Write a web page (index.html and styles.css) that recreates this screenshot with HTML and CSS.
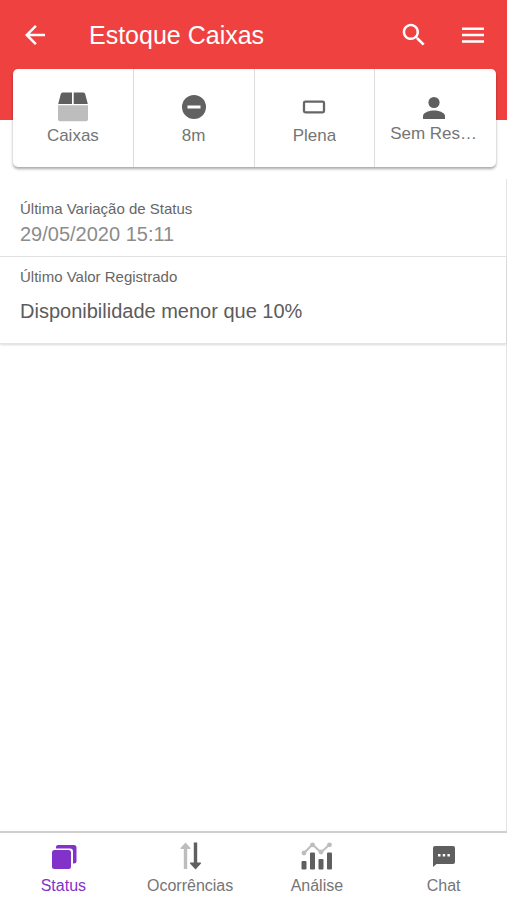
FILE: index.html
```html
<!DOCTYPE html>
<html lang="pt-BR">
<head>
  <meta charset="UTF-8" />
  <meta name="viewport" content="width=device-width, initial-scale=1" />
  <title>Estoque Caixas</title>
  <link rel="stylesheet" href="styles.css">
</head>
<body>

  <header class="header">
    <div class="toolbar">
      <button class="icon-btn" type="button" aria-label="Voltar">
        <svg width="30" height="30" viewBox="0 0 24 24" fill="#fff"><path d="M20 11H7.83l5.59-5.59L12 4l-8 8 8 8 1.41-1.41L7.83 13H20v-2z"/></svg>
      </button>
      <h1>Estoque Caixas</h1>
      <button class="icon-btn" type="button" aria-label="Buscar">
        <svg width="30" height="30" viewBox="0 0 24 24" fill="#fff"><path d="M15.5 14h-.79l-.28-.27C15.41 12.59 16 11.11 16 9.5 16 5.91 13.09 3 9.5 3S3 5.91 3 9.5 5.91 16 9.5 16c1.61 0 3.09-.59 4.23-1.57l.27.28v.79l5 4.99L20.49 19l-4.99-5zm-6 0C7.01 14 5 11.99 5 9.5S7.01 5 9.5 5 14 7.01 14 9.5 11.99 14 9.5 14z"/></svg>
      </button>
      <button class="icon-btn" type="button" aria-label="Menu">
        <svg width="30" height="30" viewBox="0 0 30 30" fill="#fff"><path d="M4 7.500h22V10H4zM4 13.800h22v2.500H4zM4 20.200h22v2.500H4z"/></svg>
      </button>
    </div>
  </header>

  <section class="card">
    <div class="card-item">
      <svg width="30" height="30" viewBox="0 0 30 30">
        <path fill="#5f5f5f" d="M4.600 0.500H14v11.500H0.200L2.800 2Q3.200 0.500 4.600 0.500zM15.700 0.500h9.700q1.400 0 1.800 1.500l2.600 10H15.700z"/>
        <path fill="#bdbdbd" d="M0 13.300h30v14q0 2-2 2H2q-2 0-2-2z"/>
      </svg>
      <span>Caixas</span>
    </div>
    <div class="card-item">
      <svg width="30" height="30" viewBox="0 0 30 30">
        <circle cx="15" cy="15" r="12" fill="#616161"/>
        <rect x="8.500" y="13.500" width="13" height="3" fill="#fff"/>
      </svg>
      <span>8m</span>
    </div>
    <div class="card-item">
      <svg width="30" height="30" viewBox="0 0 30 30">
        <rect x="5" y="9.700" width="20" height="10.600" rx="1.300" fill="none" stroke="#666" stroke-width="2.300"/>
      </svg>
      <span>Plena</span>
    </div>
    <div class="card-item user">
      <svg width="30" height="26" viewBox="0 0 30 26" fill="#5f5f5f">
        <circle cx="15" cy="8.500" r="5.600"/>
        <path d="M4 25v-3c0-3.700 7-5.500 11-5.500s11 1.800 11 5.500v3z"/>
      </svg>
      <span>Sem Res…</span>
    </div>
  </section>

  <main class="content">
    <div class="row">
      <p class="label">Última Variação de Status</p>
      <p class="value">29/05/2020 15:11</p>
    </div>
    <div class="row last">
      <p class="label">Último Valor Registrado</p>
      <p class="value">Disponibilidade menor que 10%</p>
    </div>
  </main>

  <nav class="tabs">
    <a class="active" href="#status">
      <svg width="34" height="30" viewBox="0 0 34 30" fill="#8232c8">
        <path d="M12 3h16q2.500 0 2.500 2.500v14q0 2-2.500 2h-1V9.500Q27 6.500 24 6.500H10V5q0-2 2-2z"/>
        <rect x="6" y="8" width="19" height="19" rx="2.500"/>
      </svg>
      <span>Status</span>
    </a>
    <a href="#ocorrencias">
      <svg width="34" height="30" viewBox="0 0 34 30">
        <path fill="#bdbdbd" d="M12.500 0.500l5 5.500q.5 1-.6 1h-2.700v20h-3.400V7H8.100q-1.100 0-.6-1z"/>
        <path fill="#5f5f5f" d="M20.800 0.500h3.400V20.500h3.200q1.100 0 .6 1l-5.500 6-5.500-6q-.5-1 .6-1h3.200z"/>
      </svg>
      <span>Ocorrências</span>
    </a>
    <a href="#analise">
      <svg width="34" height="30" viewBox="0 0 34 30">
        <path fill="none" stroke="#bdbdbd" stroke-width="2" d="M4 11L12.500 2.500l8.500 8L29.500 2.500"/>
        <g fill="#bdbdbd"><circle cx="4" cy="11" r="2.400"/><circle cx="12.500" cy="2.800" r="2.400"/><circle cx="21" cy="10" r="2.400"/><circle cx="29.500" cy="2.800" r="2.400"/></g>
        <g fill="#5f5f5f"><rect x="1.500" y="19" width="5" height="8.500" rx="1"/><rect x="10" y="10.500" width="5" height="17" rx="1"/><rect x="18.500" y="17" width="5" height="10.500" rx="1"/><rect x="27" y="10.500" width="5" height="17" rx="1"/></g>
      </svg>
      <span>Análise</span>
    </a>
    <a href="#chat">
      <svg width="34" height="30" viewBox="0 0 34 30">
        <path fill="#5f5f5f" d="M8 4h18q2 0 2 2v14q0 2-2 2H9.500L6 25V6q0-2 2-2z"/>
        <path fill="#fff" d="M11 12h2.500v2.500H11zM15.700 12h2.500v2.500h-2.500zM20.400 12h2.500v2.500h-2.500z"/>
      </svg>
      <span>Chat</span>
    </a>
  </nav>

</body>
</html>
```

FILE: styles.css
```css
* {
  box-sizing: border-box;
}
body {
  margin: 0;
  min-height: 100vh;
  display: flex;
  flex-direction: column;
  background: #fff;
  color: #666;
  font-family: "Liberation Sans", Arial, sans-serif;
}
.header {
  height: 120px;
  background: #f04141;
}
.toolbar {
  display: flex;
  align-items: center;
  height: 70px;
  padding: 0 19px 0 20px;
}
.toolbar h1 {
  flex: 1;
  margin: 0 0 0 39px;
  color: #fff;
  font-size: 25px;
  font-weight: normal;
}
.icon-btn {
  display: flex;
  padding: 0;
  border: none;
  background: none;
  cursor: pointer;
}
.icon-btn + .icon-btn {
  margin-left: 29px;
}
.card {
  display: grid;
  grid-template-columns: repeat(4, 1fr);
  height: 98px;
  margin: -51px 11px 0 13px;
  background: #fff;
  border-radius: 5px;
  box-shadow: 0 2px 3px rgba(0, 0, 0, 0.35);
}
.card-item {
  display: flex;
  flex-direction: column;
  align-items: center;
  min-width: 0;
  padding: 23px 12px 0;
  border-right: 1px solid #dcdcdc;
  color: #757575;
  font-size: 17px;
  line-height: 20px;
}
.card-item:last-child {
  border-right: none;
}
.card-item span {
  max-width: 100%;
  margin-top: 4px;
  overflow: hidden;
  text-overflow: ellipsis;
  white-space: nowrap;
}
.card-item.user {
  padding: 25px 16px 0 12px;
}
.content {
  flex: 1;
  margin-top: 12px;
  border-right: 1px solid #e4e4e4;
}
.row {
  padding: 20px 20px 10px;
  border-bottom: 1px solid #e4e4e4;
}
.row p {
  margin: 0;
}
.row .label {
  color: #666;
  font-size: 15px;
  line-height: 20px;
}
.row .value {
  margin-top: 3px;
  color: #8c8c8c;
  font-size: 20px;
  line-height: 24px;
}
.row.last {
  padding: 10px 20px 20px;
  box-shadow: 0 1px 2px rgba(0, 0, 0, 0.15);
}
.row.last .value {
  margin-top: 12px;
  color: #5c5c5c;
}
.tabs {
  display: grid;
  grid-template-columns: repeat(4, 1fr);
  height: 69px;
  border-top: 2px solid #cfcfcf;
}
.tabs a {
  display: flex;
  flex-direction: column;
  align-items: center;
  padding-top: 9px;
  color: #757575;
  font-size: 16px;
  line-height: 20px;
  text-decoration: none;
}
.tabs span {
  margin-top: 4px;
}
.tabs .active {
  color: #8232c8;
}
```
